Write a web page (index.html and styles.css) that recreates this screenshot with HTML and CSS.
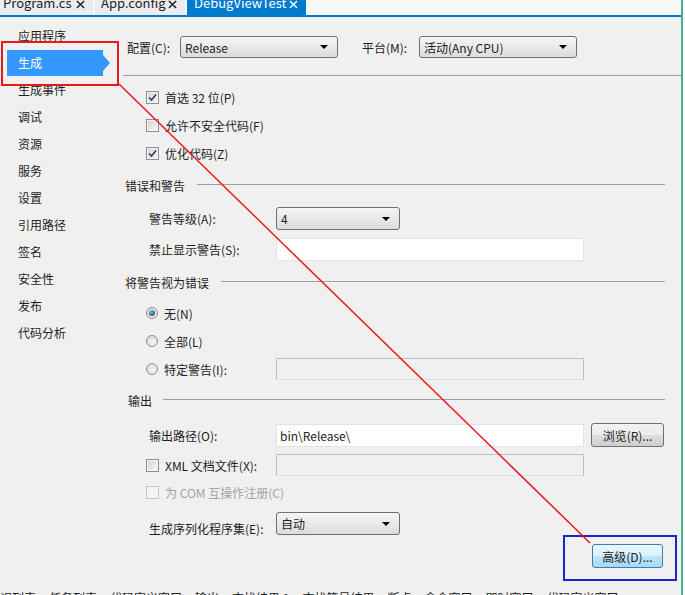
FILE: index.html
```html
<!DOCTYPE html>
<html>
<head>
    <meta charset="utf-8">
    <link rel="stylesheet" href="styles.css">
</head>
<body>
    <div class="window">
        <div class="main">
            <div class="doc-tabs">
                <div class="doc-tab tab-program">
                    <span class="tab-name">Program.cs</span>
                    <svg class="tab-close" viewBox="0 0 10 10"><path d="M1 1 L9 9 M9 1 L1 9"/></svg>
                </div>
                <div class="doc-tab tab-app">
                    <span class="tab-name">App.config</span>
                    <svg class="tab-close" viewBox="0 0 10 10"><path d="M1 1 L9 9 M9 1 L1 9"/></svg>
                </div>
                <div class="doc-tab tab-debug active">
                    <span class="tab-name">DebugViewTest</span>
                    <svg class="tab-close" viewBox="0 0 10 10"><path d="M1 1 L9 9 M9 1 L1 9"/></svg>
                </div>
            </div>

            <div class="page">
                <ul class="nav">
                    <li>应用程序</li>
                    <li class="active">生成</li>
                    <li>生成事件</li>
                    <li>调试</li>
                    <li>资源</li>
                    <li>服务</li>
                    <li>设置</li>
                    <li>引用路径</li>
                    <li>签名</li>
                    <li>安全性</li>
                    <li>发布</li>
                    <li>代码分析</li>
                </ul>

                <div class="form">
                    <div class="config-row">
                        <span class="config-label">配置(C):</span>
                        <div class="select select-wide"><span>Release</span><i class="caret"></i></div>
                        <span class="config-label platform-label">平台(M):</span>
                        <div class="select select-wide"><span>活动(Any CPU)</span><i class="caret"></i></div>
                    </div>
                    <div class="divider"></div>

                    <div class="checks">
                        <div class="check-row">
                            <span class="box"><svg viewBox="0 0 13 13"><path d="M3 6.5 L5.5 9 L10 3.5"/></svg></span>
                            <span>首选 32 位(P)</span>
                        </div>
                        <div class="check-row">
                            <span class="box"></span>
                            <span>允许不安全代码(F)</span>
                        </div>
                        <div class="check-row">
                            <span class="box"><svg viewBox="0 0 13 13"><path d="M3 6.5 L5.5 9 L10 3.5"/></svg></span>
                            <span>优化代码(Z)</span>
                        </div>
                    </div>

                    <div class="section section-errors">错误和警告</div>
                    <div class="field">
                        <span class="field-label">警告等级(A):</span>
                        <div class="select select-small"><span>4</span><i class="caret"></i></div>
                    </div>
                    <div class="field">
                        <span class="field-label">禁止显示警告(S):</span>
                        <div class="textbox"></div>
                    </div>

                    <div class="section section-treat">将警告视为错误</div>
                    <div class="radios">
                        <div class="radio-row">
                            <span class="radio checked"></span>
                            <span>无(N)</span>
                        </div>
                        <div class="radio-row">
                            <span class="radio"></span>
                            <span>全部(L)</span>
                        </div>
                        <div class="radio-row field-grid">
                            <span class="radio-label"><span class="radio"></span><span>特定警告(I):</span></span>
                            <div class="textbox disabled textbox-short"></div>
                        </div>
                    </div>

                    <div class="section section-output">输出</div>
                    <div class="field field-path">
                        <span class="field-label">输出路径(O):</span>
                        <div class="textbox"><span>bin\Release\</span></div>
                        <button class="btn">浏览(R)...</button>
                    </div>
                    <div class="field field-xml">
                        <span class="check-label"><span class="box"></span><span>XML 文档文件(X):</span></span>
                        <div class="textbox disabled textbox-short"></div>
                    </div>
                    <div class="check-row check-com">
                        <span class="box disabled"></span>
                        <span>为 COM 互操作注册(C)</span>
                    </div>
                    <div class="field field-serial">
                        <span class="field-label">生成序列化程序集(E):</span>
                        <div class="select select-small"><span>自动</span><i class="caret"></i></div>
                    </div>

                    <div class="advanced-row">
                        <button class="btn btn-hot">高级(D)...</button>
                    </div>
                </div>
            </div>

            <div class="tool-tabs">
                <span>错误列表</span>
                <span>任务列表</span>
                <span>代码定义窗口</span>
                <span>输出</span>
                <span>查找结果 1</span>
                <span>查找符号结果</span>
                <span>断点</span>
                <span>命令窗口</span>
                <span>即时窗口</span>
                <span>代码定义窗口</span>
            </div>
        </div>
        <div class="edge"></div>
    </div>

    <!-- annotations drawn over the screenshot -->
    <div class="mark mark-red"></div>
    <div class="mark mark-blue"></div>
    <svg class="pointer-line" width="685" height="595" viewBox="0 0 685 595">
        <line x1="119" y1="84" x2="590" y2="543"/>
    </svg>
</body>
</html>
```

FILE: styles.css
```css
* {
    box-sizing: border-box;
}

html, body {
    margin: 0;
    padding: 0;
}

body {
    width: 685px;
    height: 595px;
    overflow: hidden;
    position: relative;
    font-family: "Noto Sans CJK SC", "Noto Sans", sans-serif;
    font-size: 12px;
    color: #1e1e1e;
    background: #fff;
}

.window {
    display: flex;
    height: 595px;
}

.main {
    width: 681px;
    display: flex;
    flex-direction: column;
    background: #f0f0f0;
    overflow: hidden;
}

.edge {
    width: 2px;
    background: #3fb394;
}

/* document tabs */
.doc-tabs {
    display: flex;
    gap: 2px;
    height: 17px;
    flex-shrink: 0;
    background: #f7f7f7;
    border-bottom: 2px solid #007acc;
}

.doc-tab {
    display: flex;
    align-items: flex-start;
    justify-content: space-between;
    height: 15px;
    padding: 0 8px 0 3px;
    background: #ececee;
    overflow: hidden;
    font-size: 13px;
    line-height: 13px;
    color: #1e1e1e;
}

.tab-name {
    margin-top: -4px;
}

.tab-close {
    width: 9px;
    height: 9px;
    margin-top: 0;
    fill: none;
    stroke: #1e1e1e;
    stroke-width: 1.6;
}

.tab-program { width: 93px; }
.tab-app { width: 90px; padding-left: 6px; }
.tab-debug { width: 119px; padding-left: 7px; }

.doc-tab.active {
    background: #007acc;
    color: #fff;
}

.doc-tab.active .tab-close {
    stroke: #fff;
}

/* page */
.page {
    display: flex;
    flex: 1;
}

.nav {
    width: 113px;
    flex-shrink: 0;
    list-style: none;
    margin: 0;
    padding: 5px 0 0 0;
}

.nav li {
    height: 27px;
    line-height: 27px;
    padding-left: 18px;
}

.nav li.active {
    position: relative;
    width: 96px;
    height: 26px;
    line-height: 26px;
    margin: 1px 0 0 7px;
    padding-left: 11px;
    background: #3399ff;
    color: #fff;
}

.nav li.active::after {
    content: '';
    position: absolute;
    right: -7px;
    top: 5px;
    border-left: 7px solid #3399ff;
    border-top: 8px solid transparent;
    border-bottom: 8px solid transparent;
}

.form {
    flex: 1;
    padding-top: 19px;
}

.config-row {
    display: flex;
    align-items: center;
    height: 22px;
    padding-left: 14px;
}

.config-label {
    width: 53px;
}

.platform-label {
    width: 57px;
    margin-left: 24px;
}

/* combo box */
.select {
    display: flex;
    align-items: center;
    justify-content: space-between;
    height: 23px;
    padding: 0 9px 0 4px;
    border: 1px solid #707070;
    border-radius: 3px;
    background: linear-gradient(#f6f6f6, #e6e6e6 60%, #dcdcdc);
}

.select-wide {
    width: 158px;
    height: 22px;
}

.select-small {
    width: 124px;
}

.caret {
    width: 0;
    height: 0;
    border-top: 4px solid #000;
    border-left: 4px solid transparent;
    border-right: 4px solid transparent;
}

.divider {
    height: 1px;
    margin: 17px 0 0 10px;
    background: #a0a0a0;
}

/* check boxes and radios */
.checks {
    margin-top: 7px;
    padding-left: 33px;
}

.check-row,
.radio-row,
.check-label,
.radio-label {
    display: flex;
    align-items: center;
    gap: 6px;
}

.check-row,
.radio-row {
    height: 28px;
}

.box {
    display: flex;
    align-items: center;
    justify-content: center;
    width: 13px;
    height: 13px;
    border: 1px solid #8e8f8f;
    background: linear-gradient(135deg, #d2d2d2, #f8f8f8);
    box-shadow: inset 0 0 0 1px #f4f4f4;
}

.box svg {
    width: 13px;
    height: 13px;
    flex-shrink: 0;
    fill: none;
    stroke: #31405e;
    stroke-width: 1.7;
}

.box.disabled {
    border-color: #c6c6c6;
    background: #f4f4f4;
}

.radio {
    display: flex;
    align-items: center;
    justify-content: center;
    width: 12px;
    height: 12px;
    border: 1px solid #8e8f8f;
    border-radius: 50%;
    background: radial-gradient(circle at 60% 60%, #f6f6f6, #d3d3d3);
}

.radio.checked::after {
    content: '';
    width: 6px;
    height: 6px;
    border-radius: 50%;
    background: radial-gradient(circle at 40% 35%, #86c5e8, #1a5a87 70%);
}

.radios {
    margin-top: 3px;
    padding-left: 33px;
}

/* section headers */
.section {
    display: flex;
    align-items: center;
    height: 28px;
    padding-left: 12px;
}

.section::after {
    content: '';
    flex: 1;
    height: 1px;
    margin: -1px 16px 0 12px;
    background: #a0a0a0;
}

.section-errors { margin-top: 4px; }
.section-treat { margin-top: 3px; }
.section-output { margin-top: 3px; padding-left: 15px; }
.section-output::after { margin-left: 11px; }

/* label + control rows */
.field,
.field-grid {
    display: grid;
    grid-template-columns: 130px auto auto;
    justify-content: start;
    align-items: center;
    column-gap: 7px;
}

.field {
    height: 31px;
    padding-left: 33px;
}

.section-errors + .field {
    margin-top: 4px;
}

.field-label {
    padding-left: 3px;
}

.field .select,
.field .textbox,
.field-grid .textbox {
    margin-left: -7px;
}

.textbox {
    display: flex;
    align-items: center;
    width: 308px;
    height: 23px;
    padding-left: 3px;
    border: 1px solid #e2e3ea;
    background: #fff;
}

.textbox.disabled {
    border-color: #c2c2c2;
    border-bottom-color: #dedede;
    background: #f0f0f0;
}

.textbox-short {
    height: 22px;
}

.field-path {
    height: 32px;
    margin-top: 5px;
}

.field-xml {
    height: 28px;
}

.check-com {
    height: 27px;
    padding-left: 33px;
    color: #a3a3a3;
}

.field-serial {
    height: 29px;
    margin-top: 3px;
}

.field-serial .field-label {
    padding-top: 9px;
}

/* buttons */
.btn {
    height: 24px;
    padding: 0 7px;
    font-family: inherit;
    font-size: 12px;
    color: #1e1e1e;
    border: 1px solid #707070;
    border-radius: 3px;
    background: linear-gradient(#f2f2f2, #ebebeb 50%, #dddddd 51%, #cfcfcf);
}

.field-path .btn {
    width: 73px;
}

.advanced-row {
    display: flex;
    justify-content: flex-end;
    margin-top: 6px;
    padding-right: 18px;
}

.btn-hot {
    width: 71px;
    border-color: #3c7fb1;
    background: linear-gradient(#eaf6fd, #d9f0fc 50%, #bee6fd 51%, #a7d9f5);
}

/* bottom tool windows strip */
.tool-tabs {
    display: flex;
    gap: 13px;
    height: 7px;
    flex-shrink: 0;
    margin-left: -12px;
    line-height: 19px;
    white-space: nowrap;
}

/* annotations */
.mark {
    position: absolute;
    border: 2px solid;
}

.mark-red {
    left: 1px;
    top: 41px;
    width: 118px;
    height: 45px;
    border-color: #e8191c;
}

.mark-blue {
    left: 563px;
    top: 535px;
    width: 114px;
    height: 46px;
    border-color: #1d22cc;
}

.pointer-line {
    position: absolute;
    left: 0;
    top: 0;
    pointer-events: none;
}

.pointer-line line {
    stroke: #e8191c;
    stroke-width: 1.5;
}
```
